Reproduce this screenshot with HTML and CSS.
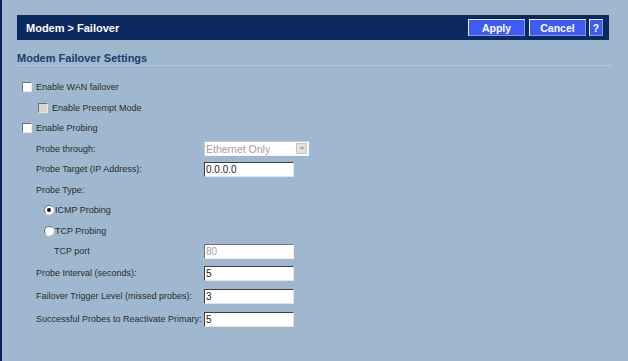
FILE: index.html
```html
<!DOCTYPE html>
<html lang="en">

<head>
     <meta charset="UTF-8" />
     <title>Modem &gt; Failover</title>
     <meta name="viewport" content="width=device-width, initial-scale=1" />
     <link rel="stylesheet" href="styles.css">
</head>

<body>

     <div class="page">
          <div class="titlebar">
               <span class="crumb">Modem &gt; Failover</span>
               <div class="actions">
                    <button class="btn">Apply</button>
                    <button class="btn">Cancel</button>
                    <button class="btn help">?</button>
               </div>
          </div>

          <h2 class="section">Modem Failover Settings</h2>

          <div class="form">
               <div class="row lvl0">
                    <span class="check"></span>
                    <span>Enable WAN failover</span>
               </div>
               <div class="row lvl1c">
                    <span class="check disabled"></span>
                    <span>Enable Preempt Mode</span>
               </div>
               <div class="row lvl0">
                    <span class="check"></span>
                    <span>Enable Probing</span>
               </div>
               <div class="row field">
                    <span class="label">Probe through:</span>
                    <span class="select">Ethernet Only<span class="arrow"></span></span>
               </div>
               <div class="row field">
                    <span class="label">Probe Target (IP Address):</span>
                    <span class="input">0.0.0.0</span>
               </div>
               <div class="row field">
                    <span class="label">Probe Type:</span>
               </div>
               <div class="row lvl2">
                    <span class="radio on"></span>
                    <span>ICMP Probing</span>
               </div>
               <div class="row lvl2">
                    <span class="radio"></span>
                    <span>TCP Probing</span>
               </div>
               <div class="row field sub">
                    <span class="label">TCP port</span>
                    <span class="input off">80</span>
               </div>
               <div class="row field tall">
                    <span class="label">Probe Interval (seconds):</span>
                    <span class="input">5</span>
               </div>
               <div class="row field tall">
                    <span class="label">Failover Trigger Level (missed probes):</span>
                    <span class="input">3</span>
               </div>
               <div class="row field tall">
                    <span class="label">Successful Probes to Reactivate Primary:</span>
                    <span class="input">5</span>
               </div>
          </div>
     </div>

</body>

</html>
```

FILE: styles.css
```css
:root {
     --navy: #0c2960;
     --bg: #a0b8cf;
     --btn: #3d5cf5;
     --text: #2b2b2b;
}

* {
     box-sizing: border-box;
     margin: 0;
     padding: 0;
}

body {
     font-family: 'Liberation Sans', Arial, sans-serif;
     background: var(--bg);
     color: var(--text);
     border-left: 2px solid #0a2356;
     min-height: 361px;
}

.page {
     padding: 15px 0 0 15px;
     width: 607px;
}

.titlebar {
     background: var(--navy);
     height: 25px;
     display: flex;
     align-items: center;
     justify-content: space-between;
     padding: 0 6px 0 9px;
}

.crumb {
     color: white;
     font-weight: bold;
     font-size: 11px;
}

.actions {
     display: flex;
     gap: 4px;
}

.btn {
     background: var(--btn);
     color: white;
     font-family: 'Liberation Sans', Arial, sans-serif;
     font-weight: bold;
     font-size: 10.5px;
     height: 17px;
     width: 57px;
     border: 1px solid #e8ecff;
     border-right-color: #8a9ad8;
     border-bottom-color: #8a9ad8;
}

.btn.help {
     width: 14px;
     margin-left: -1px;
}

.section {
     font-size: 11px;
     font-weight: bold;
     color: #1d3b70;
     padding: 12px 0 1px;
     border-bottom: 1px solid #b8c8d8;
     margin-right: -3px;
}

.form {
     padding-top: 11px;
     font-size: 9px;
}

.row {
     display: flex;
     align-items: center;
     height: 20.5px;
}

.lvl0 {
     padding-left: 5px;
}

.lvl1c {
     padding-left: 21px;
}

.lvl2 {
     padding-left: 27px;
}

.field {
     padding-left: 19px;
}

.field.sub .label {
     padding-left: 18px;
}

.field.tall {
     height: 23px;
}

.label {
     width: 168px;
     flex-shrink: 0;
}

.check {
     width: 10px;
     height: 10px;
     background: white;
     border: 1px solid;
     border-color: #707070 #e8e8e8 #e8e8e8 #707070;
     margin-right: 4px;
}

.check.disabled {
     background: #d8d4cc;
}

.radio {
     width: 10px;
     height: 10px;
     border-radius: 50%;
     background: white;
     border: 1px solid;
     border-color: #707070 #f0f0f0 #f0f0f0 #707070;
     margin-right: 1px;
     position: relative;
}

.radio.on::after {
     content: "";
     position: absolute;
     left: 2px;
     top: 2px;
     width: 4px;
     height: 4px;
     border-radius: 50%;
     background: #111;
}

.input,
.select {
     display: flex;
     align-items: center;
     width: 90px;
     height: 15px;
     background: white;
     border: 1px solid;
     border-color: #404040 #e4e4e4 #e4e4e4 #404040;
     padding-left: 1px;
     font-size: 10px;
     color: #222;
}

.input.off {
     color: #a0a0a0;
     border-color: #707070 #f0f0f0 #f0f0f0 #707070;
}

.select {
     width: 105px;
     color: #a0a0a0;
     font-size: 10.5px;
     border-color: #c8c8c8 #f4f4f4 #f4f4f4 #c8c8c8;
     justify-content: space-between;
     padding-right: 1px;
}

.arrow {
     width: 11px;
     height: 11px;
     background: #e4e2dc;
     border: 1px solid #c8c4bc;
     position: relative;
}

.arrow::after {
     content: "";
     position: absolute;
     left: 2px;
     top: 3px;
     border-left: 3px solid transparent;
     border-right: 3px solid transparent;
     border-top: 3px solid #a8a8a8;
}
```
